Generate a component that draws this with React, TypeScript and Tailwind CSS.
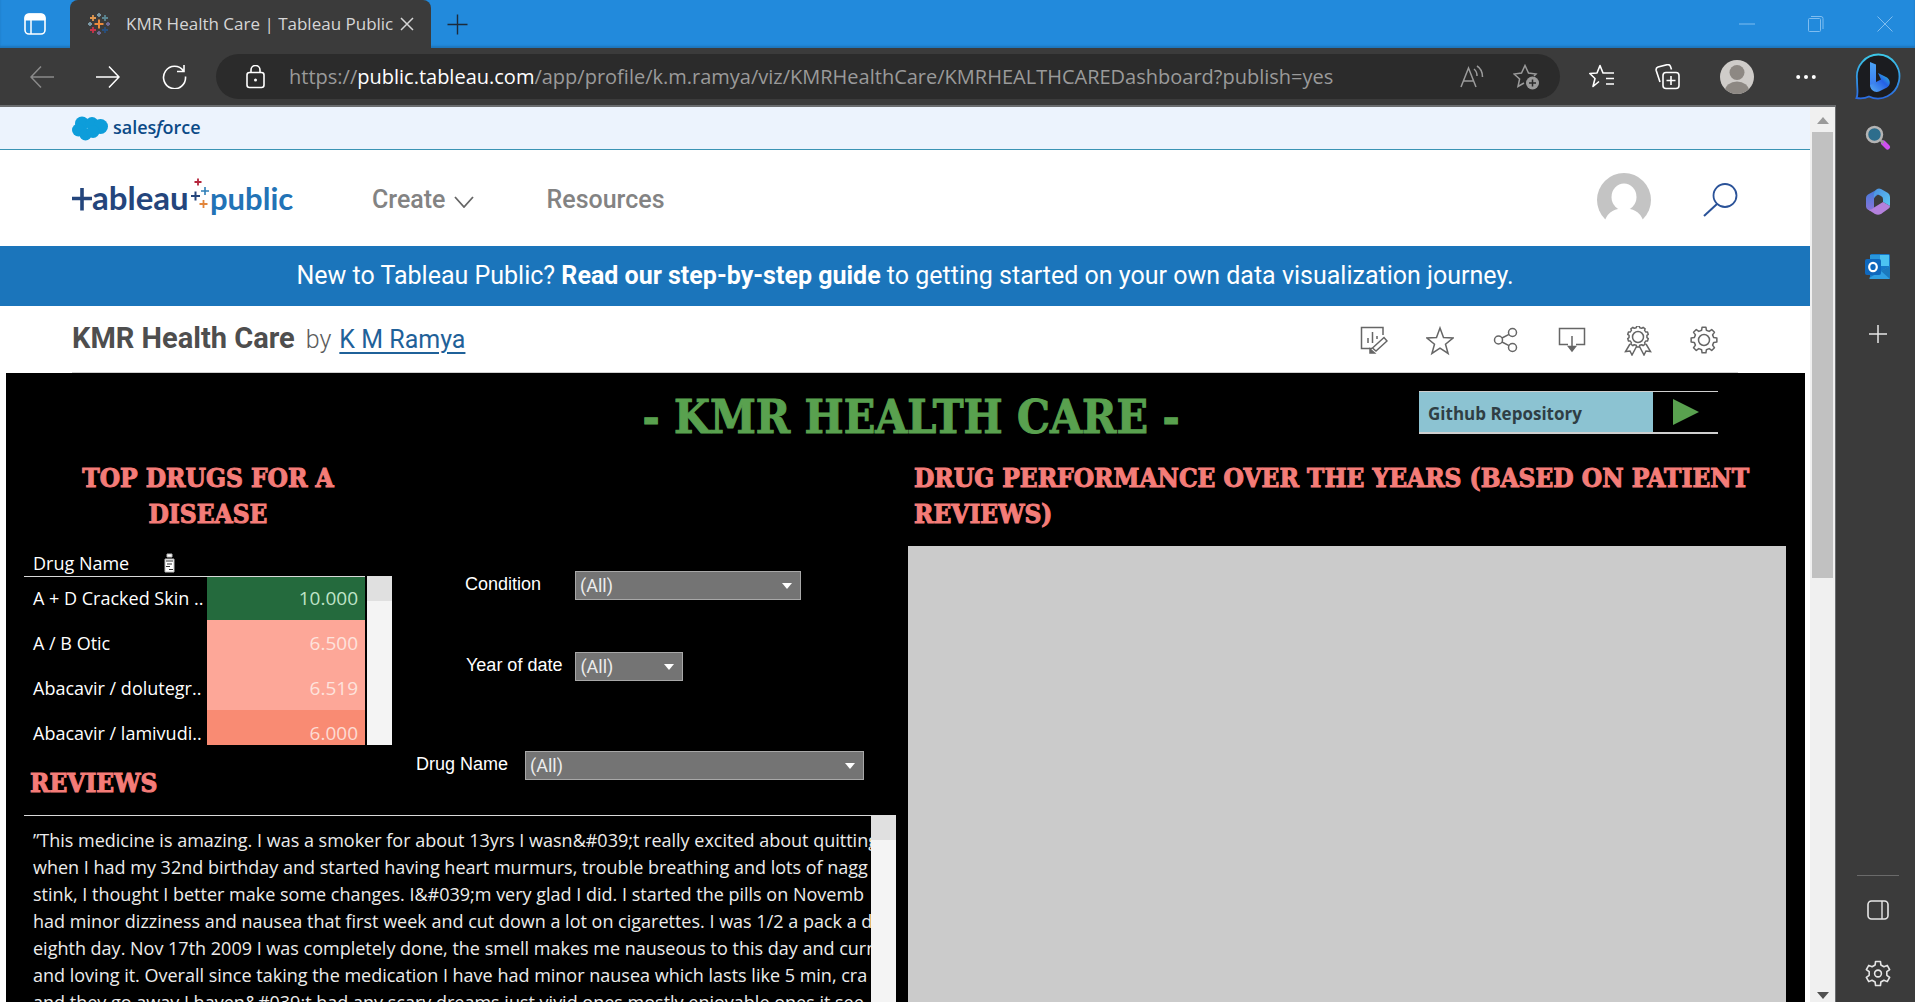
import React from "react";

const sans = "font-['Open_Sans','Noto_Sans',sans-serif]";
const ui = "font-[Roboto,sans-serif]";
const display = "font-['DejaVu_Serif_Condensed','DejaVu_Serif',serif] font-bold [-webkit-text-stroke:1px_currentColor]";

function Svg({ w, h, vb, children, className = "" }: { w: number; h: number; vb?: string; children: React.ReactNode; className?: string }) {
  return (
    <svg width={w} height={h} viewBox={vb ?? `0 0 ${w} ${h}`} fill="none" stroke="currentColor" className={`block shrink-0 ${className}`} aria-hidden="true">
      {children}
    </svg>
  );
}

function plus(x: number, y: number, r: number) {
  return `M${x - r} ${y}h${2 * r}M${x} ${y - r}v${2 * r}`;
}

function gearPath(cx: number, cy: number, teeth: number, ro: number, ri: number) {
  const step = (Math.PI * 2) / teeth;
  const pts: string[] = [];
  for (let i = 0; i < teeth; i++) {
    const a = i * step - Math.PI / 2;
    const spots: [number, number][] = [[-0.31, ri], [-0.19, ro], [0.19, ro], [0.31, ri]];
    spots.forEach(([o, r]) => pts.push(`${(cx + r * Math.cos(a + o * step)).toFixed(2)} ${(cy + r * Math.sin(a + o * step)).toFixed(2)}`));
  }
  return `M${pts.join("L")}Z`;
}

function TabBar() {
  return (
    <header className="flex h-12 shrink-0 items-stretch bg-[#228adc] shadow-[inset_0_-2px_2px_rgba(0,0,0,0.15)]">
      <button aria-label="Tab actions" className="flex w-[70px] items-center justify-center text-white">
        <Svg w={22} h={22} >
          <rect x="1" y="1" width="20" height="20" rx="4" strokeWidth="1.6" />
          <path d="M1 7V5a4 4 0 0 1 4-4h12a4 4 0 0 1 4 4v2z" fill="currentColor" />
          <path d="M7 7v14" strokeWidth="1.5" />
        </Svg>
      </button>
      <div className="flex w-[361px] items-center rounded-t-lg bg-[#3b3b3b] pl-[17px] text-[#d6d6d6]">
        <Svg w={24} h={24}>
          <path d={plus(12, 12, 4.5)} stroke="#eb8a3c" strokeWidth="2" />
          <path d={plus(6, 6, 3)} stroke="#e3984f" strokeWidth="1.8" />
          <path d={plus(18, 6, 3)} stroke="#5b8591" strokeWidth="1.8" />
          <path d={plus(6, 18, 3)} stroke="#c8344b" strokeWidth="1.8" />
          <path d={plus(18, 18, 3)} stroke="#28507f" strokeWidth="1.8" />
          <path d={plus(12, 3, 2) + plus(3, 12, 2)} stroke="#7a98a5" strokeWidth="1.8" />
          <path d={plus(21, 12, 2) + plus(12, 21, 2)} stroke="#6f6c97" strokeWidth="1.8" />
        </Svg>
        <span className={`${sans} ml-[15px] text-[17px] whitespace-nowrap`}>KMR Health Care | Tableau Public</span>
        <button aria-label="Close tab" className="ml-[6px]">
          <Svg w={16} h={16}><path d="M2 2l12 12M14 2L2 14" strokeWidth="1.5" /></Svg>
        </button>
      </div>
      <button aria-label="New tab" className="ml-4 text-[#1c2b3a]">
        <Svg w={21} h={21}><path d={plus(10.5, 10.5, 10)} strokeWidth="1.4" /></Svg>
      </button>
      <div className="ml-auto flex items-center gap-[53px] pr-[22px] text-[#7fbdf0]">
        <button aria-label="Minimize"><Svg w={16} h={16}><path d="M0 8h16" /></Svg></button>
        <button aria-label="Restore"><Svg w={16} h={16}><rect x="0.5" y="2.5" width="12" height="13" rx="1" /><path d="M3 .5h10a2 2 0 0 1 2 2V13" /></Svg></button>
        <button aria-label="Close window"><Svg w={16} h={16}><path d="M.5.5l15 15M15.5.5l-15 15" /></Svg></button>
      </div>
    </header>
  );
}

function Toolbar() {
  return (
    <div className="flex h-[57px] shrink-0 items-center bg-[#3b3b3b] pl-[30px] text-white">
      <div className="flex items-center gap-[42px]">
        <button aria-label="Back" className="text-[#8a8a8a]"><Svg w={24} h={24}><path d="M24 12H1M11 1.500L1 12l10 10.500" strokeWidth="1.5" /></Svg></button>
        <button aria-label="Forward"><Svg w={24} h={24}><path d="M0 12h23M13 1.500L23 12 13 22.500" strokeWidth="1.5" /></Svg></button>
        <button aria-label="Refresh"><Svg w={25} h={25}><path d="M21.500 7A11 11.200 0 1 0 23.500 12.500M22 1v6.500h-7" strokeWidth="1.6" /></Svg></button>
      </div>
      <div className="ml-[29px] flex h-[45px] min-w-0 flex-1 items-center rounded-full bg-[#2b2b2b] pr-[21px] pl-[30px]">
        <Svg w={19} h={24}>
          <rect x="1" y="7.500" width="17" height="15" rx="2.500" strokeWidth="1.6" />
          <path d="M5 7.500V5a4.500 4.500 0 0 1 9 0v2.500" strokeWidth="1.6" />
          <circle cx="9.500" cy="15" r="1.500" fill="currentColor" stroke="none" />
        </Svg>
        <div role="textbox" aria-label="Address" contentEditable suppressContentEditableWarning className={`${sans} ml-6 min-w-0 flex-1 overflow-hidden text-[20px] whitespace-nowrap text-[#9a9a9a]`}>
          https://<span className="text-white">public.tableau.com</span>/app/profile/k.m.ramya/viz/KMRHealthCare/KMRHEALTHCAREDashboard?publish=yes
        </div>
        <div className="flex items-center gap-7 text-[#9b9b9b]">
          <button aria-label="Read aloud"><Svg w={25} h={24}><path d="M1 22L8.500 3 16 22M3.500 16h10M14 4c2 1.500 3 4 3 7M17 1c4 2.500 5.500 6 5.500 11" strokeWidth="1.5" /></Svg></button>
          <button aria-label="Add to favorites">
            <Svg w={26} h={26}><path d="M11 19l-6 3.500 1.600-7.500L1 10l7.500-1L12 1.500 15.500 9l7.500 1-2 2" strokeWidth="1.5" /><circle cx="19.500" cy="19" r="6.500" fill="#9b9b9b" stroke="none" /><path d={plus(19.5, 19, 3.5)} stroke="#2b2b2b" strokeWidth="1.5" /></Svg>
          </button>
        </div>
      </div>
      <button aria-label="Favorites" className="ml-[29px]">
        <Svg w={26} h={25}><path d="M10 17.500l-6 5 2-8L.8 9.500 8 9l3-7.500L14 9h11M17 14.500h8M17 20h8" strokeWidth="1.6" strokeLinejoin="round" /></Svg>
      </button>
      <button aria-label="Collections" className="ml-[40px]">
        <Svg w={25} h={26}><rect x="8" y="8.500" width="16" height="16" rx="3" strokeWidth="1.600" /><path d={plus(16, 16.5, 4.500)} strokeWidth="1.600" /><path d="M5 18L1.200 6.500A3 3 0 0 1 3 3l9-2.300A3 3 0 0 1 15.500 2.500L16.500 5.500" strokeWidth="1.600" /></Svg>
      </button>
      <button aria-label="Profile" className="ml-[40px]">
        <Svg w={34} h={34}><defs><clipPath id="pc"><circle cx="17" cy="17" r="17" /></clipPath></defs><g clipPath="url(#pc)" stroke="none"><rect width="34" height="34" fill="#cfccc9" /><circle cx="17" cy="12.500" r="7.500" fill="#8d8883" /><ellipse cx="17" cy="31" rx="12" ry="9.500" fill="#8d8883" /></g></Svg>
      </button>
      <button aria-label="Settings and more" className="mr-5 ml-[42px]">
        <Svg w={20} h={6}><g fill="currentColor" stroke="none"><circle cx="2.200" cy="3" r="2" /><circle cx="10" cy="3" r="2" /><circle cx="17.800" cy="3" r="2" /></g></Svg>
      </button>
    </div>
  );
}

function Sidebar() {
  return (
    <aside className="flex w-[79px] shrink-0 flex-col items-center bg-[#3b3b3b] pl-1 text-[#e6e6e6]">
      <button aria-label="Bing chat" className="mt-[5px]">
        <Svg w={46} h={48}>
          <defs>
            <linearGradient id="b1" x1="0" y1="0" x2="0" y2="1"><stop stopColor="#3cc8e8" /><stop offset="1" stopColor="#2a6be0" /></linearGradient>
            <linearGradient id="b2" x1="0" y1="0" x2="0" y2="1"><stop stopColor="#4ba3f5" /><stop offset="1" stopColor="#3b7cf0" /></linearGradient>
            <linearGradient id="b3" x1="0" y1="1" x2="1" y2="0"><stop stopColor="#5aaef5" /><stop offset=".6" stopColor="#2460e6" /><stop offset="1" stopColor="#35d0d8" /></linearGradient>
          </defs>
          <path d="M23.500 1.500A21.500 22 0 1 1 14 43.500C10 45.500 5 45.500 1.500 45 3.500 41 2 37 2 26A21.500 22 0 0 1 23.500 1.500z" fill="#1b1c20" stroke="url(#b1)" strokeWidth="1.800" />
          <path d="M15 9l6 2.500V30l-6 3z" fill="url(#b2)" stroke="none" />
          <path d="M15 32l6-3 5-2.500-3-6.500 9 4.500c4 3 3.500 8 0 10l-8 4c-4 1.500-9-1.500-9-6.500z" fill="url(#b3)" stroke="none" />
        </Svg>
      </button>
      <button aria-label="Search" className="mt-6">
        <Svg w={26} h={26}><path d="M18.500 18l4 4" stroke="#cf4ff0" strokeWidth="5" strokeLinecap="round" /><path d="M15.500 15l3 3" stroke="#999" strokeWidth="2.500" /><circle cx="9.500" cy="9.500" r="7.500" fill="#2d6d8c" stroke="#b4b4b4" strokeWidth="2.500" /></Svg>
      </button>
      <button aria-label="Microsoft 365" className="mt-[37px]">
        <Svg w={26} h={28}>
          <defs>
            <linearGradient id="m1" x1="0" y1="0" x2="0" y2="1"><stop stopColor="#3f7bdc" /><stop offset="1" stopColor="#8a74d8" /></linearGradient>
            <linearGradient id="m2" x1="0" y1="0" x2="1" y2="1"><stop stopColor="#4a8fe0" /><stop offset="1" stopColor="#5cc8f2" /></linearGradient>
          </defs>
          <g stroke="none">
            <path d="M13 1L3 6.500Q1 7.500 1 10V18.500q0 2 2 3.200l3 1.300q3-1 3-4V11q0-2 2-3l3-2z" fill="url(#m1)" />
            <path d="M12 1q2-1 4 0l7 4q2 1.500 2 4v9L18 14v-3q0-2-2-3L12 6 9 10q-1-6 3-9z" fill="url(#m2)" />
            <path d="M3 21.500q3 1 6-2l9-5.500 7 4q0 2-2 3l-7 5q-3 1.500-6 0z" fill="#b481dd" />
          </g>
        </Svg>
      </button>
      <button aria-label="Outlook" className="mt-[38px]">
        <Svg w={26} h={25}>
          <g stroke="none">
            <rect x="5" y="0" width="20" height="24" rx="1.500" fill="#1678c8" />
            <path d="M15 1h9v11h-9z" fill="#4cc3f2" /><path d="M5 1h10v7H5z" fill="#2a97dc" />
            <path d="M4 24l21-12v12q0 1-1 1H5z" fill="#2f9fe2" /><path d="M25 12v13l-9-8z" fill="#1b79bd" />
            <rect x="0" y="5" width="16" height="16" rx="2" fill="#0f68bd" />
          </g>
          <ellipse cx="8" cy="13" rx="3.800" ry="4.200" stroke="#fff" strokeWidth="2.200" />
        </Svg>
      </button>
      <button aria-label="Customize sidebar" className="mt-[46px]"><Svg w={18} h={18}><path d={plus(9, 9, 9)} strokeWidth="1.500" /></Svg></button>
      <div className="mt-auto h-px w-[42px] bg-[#6a6a6a]" />
      <button aria-label="Toggle sidebar" className="mt-[24px]"><Svg w={22} h={20}><rect x="1" y="1" width="20" height="18" rx="3.500" strokeWidth="1.600" /><path d="M15 1v18" strokeWidth="1.400" /></Svg></button>
      <button aria-label="Settings" className="mt-[40px] mb-[15px]">
        <Svg w={26} h={27}><path d={gearPath(13, 13.5, 6, 12.3, 9)} strokeWidth="1.600" strokeLinejoin="round" /><circle cx="13" cy="13.500" r="3.400" strokeWidth="1.600" /></Svg>
      </button>
    </aside>
  );
}

function SiteHeader() {
  return (
    <>
      <div className="flex h-[43px] shrink-0 items-center border-b border-[#3a93b4] bg-[#ecf3fd] pl-[72px]">
        <a href="#salesforce" className="flex items-center gap-[5px]">
          <Svg w={36} h={25} className="text-[#0d9dda]">
            <g fill="currentColor" stroke="none"><circle cx="10" cy="7.500" r="7" /><circle cx="20" cy="7.500" r="6.500" /><circle cx="28.500" cy="10.500" r="7.500" /><circle cx="6.500" cy="14" r="6.500" /><circle cx="13.500" cy="18.500" r="6" /><circle cx="21" cy="15.500" r="6.500" /></g>
          </Svg>
          <span className={`${sans} pb-[2px] text-[18px] leading-6 font-semibold text-[#0b4a87]`}>sales<i>f</i>orce</span>
        </a>
      </div>
      <div className="flex h-24 shrink-0 items-center pr-[72px] pl-[72px]">
        <a href="#home" aria-label="Tableau Public">
          <Svg w={226} h={46}>
            <path d="M0 23.500h20M10 13v22.500" stroke="#24457c" strokeWidth="3.600" />
            <g stroke="none" className="font-[Lato,sans-serif] font-bold">
              <text x="20" y="35" fill="#24457c" className="text-[33px]">ableau</text>
              <text x="138" y="35" fill="#2273b6" className="text-[31px]">public</text>
            </g>
            <path d={plus(126, 7, 3.5)} stroke="#b5263c" strokeWidth="1.800" />
            <path d={plus(133, 16, 4)} stroke="#2f7fb8" strokeWidth="1.600" />
            <path d={plus(123.5, 21, 4.500)} stroke="#24457c" strokeWidth="2" />
            <path d={plus(131.5, 29, 4)} stroke="#e2853a" strokeWidth="1.800" />
          </Svg>
        </a>
        <nav className={`${ui} ml-[74px] flex items-center gap-[73px] pt-1 text-[25px] leading-8 font-medium text-[#838383]`}>
          <button className="flex items-center gap-2">Create<Svg w={20} h={12} className="mt-1 text-[#666]"><path d="M1 1l9 10L19 1" strokeWidth="1.800" /></Svg></button>
          <a href="#resources">Resources</a>
        </nav>
        <div className="ml-auto flex items-center gap-[52px] pt-1">
          <button aria-label="Account">
            <Svg w={54} h={54}><g stroke="none"><circle cx="27" cy="27" r="27" fill="#c4c4c4" /><ellipse cx="27" cy="24" rx="12.500" ry="13.500" fill="#fff" /><path d="M6 54q3-16 15-18h12q12 2 15 18z" fill="#fff" /><rect y="47" width="54" height="7" fill="#fff" /></g></Svg>
          </button>
          <button aria-label="Search site" className="text-[#2a5298]"><Svg w={35} h={34}><circle cx="22" cy="12.500" r="11.500" strokeWidth="1.800" /><path d="M14 21L1 33" strokeWidth="2" /></Svg></button>
        </div>
      </div>
      <div className={`${ui} flex h-[60px] shrink-0 items-center justify-center bg-[#1b75bb] text-[25px] text-white`}>
        <p className="whitespace-nowrap">New to Tableau Public? <a href="#guide" className="font-bold">Read our step-by-step guide</a> to getting started on your own data visualization journey.</p>
      </div>
    </>
  );
}

function TitleRow() {
  const items: [string, React.ReactNode][] = [
    ["Edit", <><path d="M12 22.500H1.500V1.500H23V9M8 17v-5M12.500 17V6M17 13V10" /><path d="M12.500 22L24 11.500l3 3.500L16 25z" /><path d="M10 23l4.500 4H10z" fill="currentColor" /></>],
    ["Favorite", <path d="M14 2l3.500 9.500 9.500.5-7.500 6.200 2.600 9.300L14 22.200 5.900 27.500l2.600-9.300L1 12l9.500-.5z" />],
    ["Share", <><circle cx="6.500" cy="14" r="4" /><circle cx="20.500" cy="6.500" r="4" /><circle cx="20.500" cy="21.500" r="4" /><path d="M10 12l7-3.700M10 16l7 3.700" /></>],
    ["Download", <><path d="M10 18.500H1.500v-16h25v16H18M14 10v12" /><path d="M10.500 20.500h7L14 25z" fill="currentColor" /></>],
    ["Badge", <><path d={gearPath(14, 10.5, 10, 10.5, 9)} strokeLinejoin="round" /><circle cx="14" cy="11" r="5.500" /><path d="M6 18L1.500 25.500l4.500-.5 2 4 4.500-8.500M22 18l4.500 7.500-4.500-.5-2 4-4.500-8.500" /></>],
    ["Settings", <><path d={gearPath(14, 14, 8, 13, 10)} strokeLinejoin="round" /><circle cx="14" cy="14" r="5.500" /></>],
  ];
  return (
    <div className="mx-[72px] flex h-[67px] shrink-0 items-center border-b border-[#d0d0d0] pr-5">
      <h1 className={`${ui} flex items-baseline text-[25px] text-[#5c5c5c]`}>
        <span className="text-[29px] font-bold text-[#4e4e4e]">KMR Health Care</span>
        <span className="ml-[11px] font-light">by</span>
        <a href="#author" className="ml-2 text-[#1f6199] underline underline-offset-4">K M Ramya</a>
      </h1>
      <div className="ml-auto flex items-center gap-[38px] pt-1 text-[#666]">
        {items.map(([label, art]) => (
          <button key={label} aria-label={label}><Svg w={28} h={30} className="[stroke-width:1.5]">{art}</Svg></button>
        ))}
      </div>
    </div>
  );
}

const drugs = [
  { name: "A + D Cracked Skin ..", score: "10.000", tone: "bg-[#246a3d] text-[#bfe3c8]", h: "h-[44px]" },
  { name: "A / B Otic", score: "6.500", tone: "bg-[#fda798] text-[#fde3dd]", h: "h-[45px]" },
  { name: "Abacavir / dolutegr..", score: "6.519", tone: "bg-[#fda798] text-[#fde3dd]", h: "h-[45px]" },
  { name: "Abacavir / lamivudi..", score: "6.000", tone: "bg-[#f98b73] text-[#fddcd4]", h: "h-[45px]" },
];

const reviewLines = [
  "”This medicine is amazing. I was a smoker for about 13yrs I wasn&#039;t really excited about quitting",
  "when I had my 32nd birthday and started having heart murmurs, trouble breathing and lots of nagg",
  "stink, I thought I better make some changes. I&#039;m very glad I did. I started the pills on Novemb",
  "had minor dizziness and nausea that first week and cut down a lot on cigarettes. I was 1/2 a pack a d",
  "eighth day. Nov 17th 2009 I was completely done, the smell makes me nauseous to this day and curr",
  "and loving it. Overall since taking the medication I have had minor nausea which lasts like 5 min, cra",
  "and they go away I haven&#039;t had any scary dreams just vivid ones mostly enjoyable ones it see",
];

function Filter({ id, label, width, gap, className = "" }: { id: string; label: string; width: string; gap: string; className?: string }) {
  return (
    <div className={`flex items-center ${gap} ${className}`}>
      <label htmlFor={id} className="pb-1 font-['Liberation_Sans',sans-serif] text-[18px] leading-6 whitespace-nowrap text-white">{label}</label>
      <div className={`relative ${width}`}>
        <select id={id} className="h-[29px] w-full appearance-none border border-[#a8a8a8] bg-[#747474] px-1 font-[Roboto,sans-serif] text-[18px] text-[#ececec]">
          <option>(All)</option>
        </select>
        <Svg w={10} h={6} className="pointer-events-none absolute top-3 right-[9px] text-white"><path d="M0 0h10L5 6z" fill="currentColor" stroke="none" /></Svg>
      </div>
    </div>
  );
}

function ScrollTrack({ className }: { className: string }) {
  return <div className={`w-[25px] shrink-0 bg-[#f4f4f4] ${className}`}><div className="h-[25px] bg-[#e0e0e0]" /></div>;
}

function Dashboard() {
  return (
    <main className="mr-[5px] ml-[6px] flex min-h-0 flex-1 flex-col overflow-hidden bg-black pr-[19px] pl-[18px]">
      <div className="grid shrink-0 grid-cols-[1fr_auto_1fr] pt-[18px]">
        <h2 className={`${display} col-start-2 ml-3 text-[46px] leading-[52px] whitespace-nowrap text-[#59a14f]`}>- KMR HEALTH CARE -</h2>
        <a href="#github" className="mr-[68px] flex h-[43px] w-[299px] items-stretch justify-self-end border-t border-b-2 border-[#cfcfcf]">
          <span className={`${sans} flex flex-1 items-center bg-[#8cc3d2] pt-1 pl-[9px] text-[17px] font-bold text-[#2f3e44]`}>Github Repository</span>
          <span className="flex w-[65px] items-center justify-center"><Svg w={26} h={26}><path d="M0 0l26 13L0 26z" fill="#59a14f" stroke="none" /></Svg></span>
        </a>
      </div>
      <div className="grid min-h-0 flex-1 grid-cols-[872fr_878fr] gap-3">
        <div className="flex min-h-0 min-w-0 flex-col">
          <div className="flex shrink-0">
            <section className="w-[368px] shrink-0">
              <h3 className={`${display} mt-[17px] px-10 text-center text-[26px] leading-9 text-[#f47c78]`}>TOP DRUGS FOR A DISEASE</h3>
              <div className={`${sans} mt-[18px] flex h-[195px] items-end gap-[2px] text-[18px] text-white`}>
                <div className="h-full flex-1 overflow-hidden">
                  <table className="w-full border-collapse leading-6">
                    <thead>
                      <tr className="border-b border-[#d9d9d9]">
                        <th colSpan={2} className="h-[26px] p-0 text-left font-normal">
                          <div className="flex items-center pl-[9px]">
                            <span className="w-[131px] text-[18px]">Drug Name</span>
                            <button aria-label="Sort">
                              <Svg w={11} h={20}>
                                <path d="M3 1h5v3H3zM1 6h9v13H1z" fill="#fff" stroke="#bbb" />
                                <path d="M2 8h7M3 11h5M2 13.500h4M5 16.500h4" stroke="#333" />
                              </Svg>
                            </button>
                          </div>
                        </th>
                      </tr>
                    </thead>
                    <tbody>
                      {drugs.map((d) => (
                        <tr key={d.name} className={d.h}>
                          <td className="p-0 pl-[9px] whitespace-nowrap">{d.name}</td>
                          <td className={`w-[158px] p-0 pr-[7px] text-right text-[19px] ${d.tone}`}>{d.score}</td>
                        </tr>
                      ))}
                    </tbody>
                  </table>
                </div>
                <ScrollTrack className="h-[169px]" />
              </div>
              <h3 className={`${display} mt-5 ml-[6px] text-[26px] leading-9 text-[#f47c78]`}>REVIEWS</h3>
            </section>
            <section className="ml-6 flex flex-1 flex-col pt-[128px]">
              <Filter id="condition" label="Condition" width="w-[226px]" gap="gap-[34px]" className="ml-[49px]" />
              <Filter id="year" label="Year of date" width="w-[108px]" gap="gap-[13px]" className="mt-[52px] ml-[50px]" />
              <Filter id="drug" label="Drug Name" width="w-[339px]" gap="gap-[17px]" className="mt-[70px]" />
            </section>
          </div>
          <div className="mt-[14px] flex min-h-0 flex-1">
            <div className={`${sans} min-w-0 flex-1 overflow-hidden border-t border-[#d9d9d9] pt-[11px] pl-[9px] text-[18px] leading-[27px] text-[#ececec]`}>
              {reviewLines.map((l) => <p key={l} className="whitespace-nowrap">{l}</p>)}
            </div>
            <ScrollTrack className="h-full" />
          </div>
        </div>
        <section className="flex min-h-0 flex-col">
          <h3 className={`${display} mt-[17px] pl-[6px] text-[26px] leading-9 text-[#f47c78]`}>DRUG PERFORMANCE OVER THE YEARS (BASED ON PATIENT REVIEWS)</h3>
          <div className="mt-[14px] flex-1 bg-[#cbcbcb]" />
        </section>
      </div>
    </main>
  );
}

export default function App() {
  return (
    <div className="flex h-screen flex-col overflow-hidden bg-white">
      <TabBar />
      <div className="flex min-h-0 flex-1">
        <div className="flex min-w-0 flex-1 flex-col">
          <Toolbar />
          <div className="flex min-h-0 flex-1 border-t-2 border-r border-[#6a6c6e]">
            <div className="flex min-w-0 flex-1 flex-col">
              <SiteHeader />
              <TitleRow />
              <Dashboard />
            </div>
            <div className="flex w-[25px] shrink-0 flex-col items-center bg-[#f0f0f0]">
              <Svg w={12} h={7} className="mt-[10px] text-[#9a9a9a]"><path d="M0 7h12L6 0z" fill="currentColor" stroke="none" /></Svg>
              <div className="mt-2 h-[446px] w-[21px] bg-[#c1c1c1]" />
              <Svg w={12} h={7} className="mt-auto mb-[3px] text-[#505050]"><path d="M0 0h12L6 7z" fill="currentColor" stroke="none" /></Svg>
            </div>
          </div>
        </div>
        <Sidebar />
      </div>
    </div>
  );
}
